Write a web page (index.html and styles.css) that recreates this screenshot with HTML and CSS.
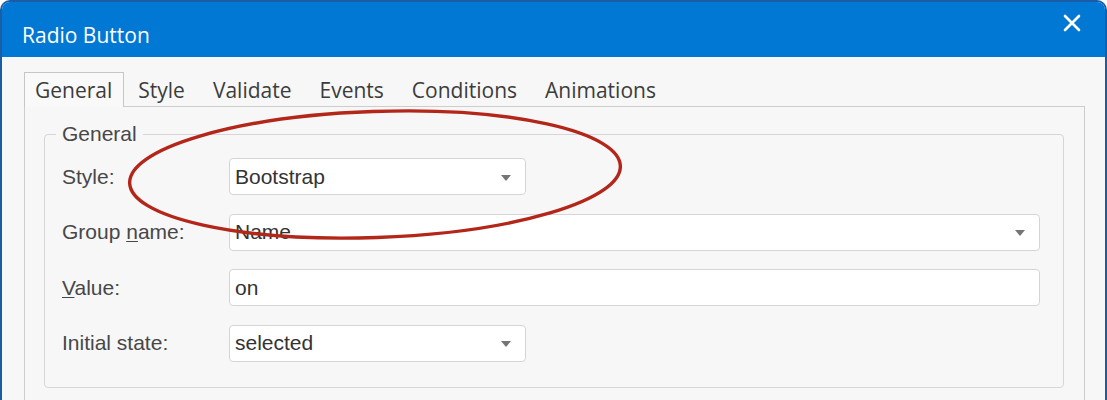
FILE: index.html
```html
<!DOCTYPE html>
<html>
<head>
<meta charset="utf-8">
<link rel="stylesheet" href="styles.css">
</head>
<body>
<div class="window">
  <div class="titlebar">
    <span class="title">Radio Button</span>
    <svg class="close" width="18" height="18" viewBox="0 0 18 18"><path d="M2 2 L16 16 M16 2 L2 16" stroke="#fff" stroke-width="2.6" stroke-linecap="round"/></svg>
  </div>
  <div class="content">
    <div class="tabs">
      <div class="tab active">General</div>
      <div class="tab">Style</div>
      <div class="tab">Validate</div>
      <div class="tab">Events</div>
      <div class="tab">Conditions</div>
      <div class="tab">Animations</div>
    </div>
    <div class="panel">
      <fieldset class="group">
        <legend>General</legend>
        <div class="row">
          <label class="lbl">Style:</label>
          <div class="field narrow select"><span>Bootstrap</span><i class="arrow"></i></div>
        </div>
        <div class="row">
          <label class="lbl">Group <u>n</u>ame:</label>
          <div class="field wide select"><span>Name</span><i class="arrow"></i></div>
        </div>
        <div class="row">
          <label class="lbl"><u>V</u>alue:</label>
          <div class="field wide"><span>on</span></div>
        </div>
        <div class="row">
          <label class="lbl">Initial state:</label>
          <div class="field narrow select"><span>selected</span><i class="arrow"></i></div>
        </div>
      </fieldset>
    </div>
  </div>
  <svg class="annot" width="1107" height="400" viewBox="0 0 1107 400">
    <ellipse cx="375" cy="174.5" rx="245.5" ry="63" fill="none" stroke="#b3261a" stroke-width="3.4" transform="rotate(-2 375 174.5)"/>
  </svg>
</div>
</body>
</html>
```
FILE: styles.css
```css
html, body {
  margin: 0;
  padding: 0;
  background: #ffffff;
}
.window {
  position: relative;
  width: 1107px;
  height: 400px;
  box-sizing: border-box;
  border: 2px solid #1a5ca6;
  border-bottom: none;
  border-radius: 10px 10px 0 0;
  overflow: hidden;
  background: #f7f7f7;
}
.titlebar {
  height: 55px;
  background: #0078d4;
  display: flex;
  align-items: center;
  justify-content: space-between;
  padding: 0 24px 0 20px;
}
.title {
  color: #ffffff;
  font-family: "Open Sans", "Noto Sans", sans-serif;
  font-size: 21px;
  padding-top: 10px;
}
.close {
  margin-top: -14px;
}
.content {
  padding: 15px 20px 0 22px;
}
.tabs {
  display: flex;
  align-items: flex-end;
  font-family: "Open Sans", "Noto Sans", sans-serif;
  font-size: 21px;
  color: #3c3c3c;
}
.tab {
  height: 34px;
  line-height: 35px;
  padding: 0 13px 0 13px;
  border: 1px solid transparent;
  border-bottom: none;
  margin-bottom: -1px;
  position: relative;
}
.tab.active {
  padding: 0 11px 0 10px;
  border-color: #c6c6c6;
  background: #f9f9f9;
  z-index: 1;
}
.panel {
  border: 1px solid #cdcdcd;
  border-bottom: none;
  height: 400px;
  padding: 16px 20px 0 19px;
}
.group {
  margin: 0;
  border: 1px solid #d6d6d6;
  border-radius: 4px;
  padding: 13px 20px 25px 17px;
  font-family: "Liberation Sans", Arial, sans-serif;
  font-size: 21px;
  color: #474747;
}
.group legend {
  padding: 0 6px;
  margin-left: -6px;
  line-height: 22px;
  color: #474747;
}
.row {
  display: flex;
  align-items: center;
  margin-bottom: 18.5px;
}
.row:last-child {
  margin-bottom: 0;
}
.lbl {
  width: 167px;
  flex: none;
}
.lbl u {
  text-decoration-thickness: 1px;
  text-underline-offset: 2px;
}
.field {
  height: 37px;
  box-sizing: border-box;
  border: 1px solid #d5d5d5;
  border-radius: 4px;
  background: #ffffff;
  display: flex;
  align-items: center;
  justify-content: space-between;
  padding: 0 14px 0 5px;
  color: #333333;
}
.narrow {
  width: 297px;
}
.wide {
  width: 811px;
}
.arrow {
  width: 0;
  height: 0;
  border-left: 5px solid transparent;
  border-right: 5px solid transparent;
  border-top: 6px solid #757575;
  margin-top: 2px;
}
.annot {
  position: absolute;
  left: -2px;
  top: -2px;
  pointer-events: none;
}
```
